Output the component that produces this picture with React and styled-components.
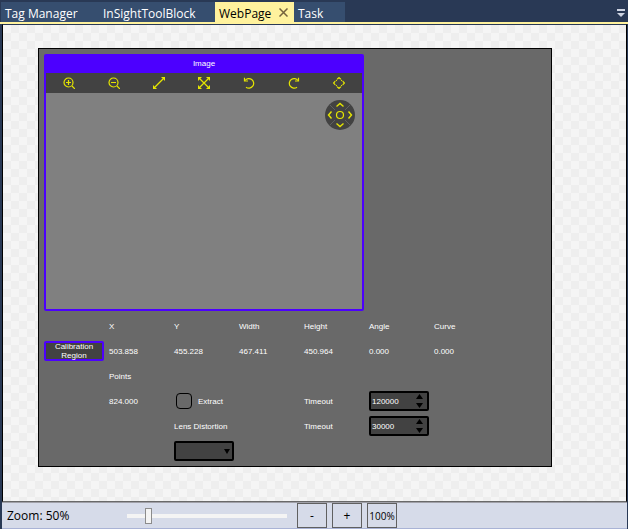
import React, { useState } from "react";
import styled, { createGlobalStyle, css } from "styled-components";

const uiFont = '"Open Sans", "Noto Sans", sans-serif';
const hmiFont = '"Liberation Sans", Arial, sans-serif';
const purple = "#4c00ff";
const yellow = "#e6e600";

const GlobalStyle = createGlobalStyle`
  * { box-sizing: border-box; }
  body { margin: 0; background: #293955; }
  button, input, select { font: inherit; color: inherit; margin: 0; }
  button { padding: 0; border: 0; background: none; }
`;

const Window = styled.div`
  display: flex;
  flex-direction: column;
  min-height: 100vh;
  font: 12px/16px ${uiFont};
  background: #293955;
`;

const TabBar = styled.header`
  display: flex;
  align-items: stretch;
  height: 24px;
  padding: 2px 0 0 1px;
  border-bottom: 2px solid #fff29d;
`;

const Tab = styled.div`
  display: flex;
  align-items: center;
  justify-content: space-between;
  min-width: ${(p) => p.$width}px;
  padding: 0 6px 0 4px;
  background: ${(p) => (p.$active ? "#fff29d" : "#364e6f")};
  color: ${(p) => (p.$active ? "#000" : "#fff")};
`;

const TabTitle = styled.button`
  white-space: nowrap;
  padding-top: 4px;
`;

const CloseButton = styled.button`
  display: flex;
  color: #75633d;
`;

const OverflowButton = styled.button`
  display: flex;
  margin: 7px 3px 0 auto;
  color: #ced4e2;
`;

const Canvas = styled.main`
  flex: 1;
  margin: 0 1px 0 2px;
  padding: 23px 74px 34px 35px;
  border: 1px solid #000;
  border-top-color: #293955;
  border-bottom-color: #696969;
  background: repeating-conic-gradient(#eeeeee 0 25%, #f5f5f5 0 50%) 0 0 / 16px 16px;
`;

const Page = styled.form`
  display: grid;
  grid-template-columns: repeat(auto-fill, 60px);
  grid-template-rows: 257px;
  grid-auto-rows: 20px;
  gap: 5px;
  padding: 5px;
  border: 1px solid #000;
  background: #696969;
  color: #fff;
  font: 8px/10px ${hmiFont};
`;

const place = css`
  grid-column: ${(p) => p.$col} / span ${(p) => p.$span || 1};
  grid-row: ${(p) => p.$row};
`;

const Label = styled.label`
  ${place}
  display: flex;
  align-items: center;
  padding-top: 2px;
  white-space: nowrap;
`;

const ImagePanel = styled.section`
  ${place}
  display: flex;
  flex-direction: column;
  border: 2px solid ${purple};
  border-radius: 2px;
  background: #808080;
`;

const ImageTitle = styled.h2`
  margin: 0;
  height: 17px;
  background: ${purple};
  font: inherit;
  line-height: 15px;
  text-align: center;
`;

const ImageToolbar = styled.div`
  display: flex;
  height: 20px;
  background: #424242;
  color: ${yellow};
`;

const ToolButton = styled.button`
  flex: 1;
  display: flex;
  align-items: center;
  justify-content: center;
`;

const ImageView = styled.div`
  flex: 1;
  display: flex;
  justify-content: flex-end;
  align-items: flex-start;
  padding: 7px;
`;

const PanButton = styled.button`
  display: flex;
  border-radius: 50%;
  color: ${yellow};
`;

const RegionButton = styled.button`
  ${place}
  display: flex;
  align-items: center;
  justify-content: center;
  border: 2px solid ${purple};
  border-radius: 2px;
  background: #424242;
  line-height: 9px;
`;

const CheckLabel = styled.label`
  ${place}
  display: flex;
  align-items: center;
  gap: 6px;
  padding-left: 2px;
`;

const CheckText = styled.span`
  padding-top: 2px;
`;

const CheckBox = styled.input`
  appearance: none;
  width: 16px;
  height: 16px;
  border: 1px solid #000;
  border-radius: 4px;
  &:checked { background: #424242; }
`;

const Spinner = styled.div`
  ${place}
  display: flex;
  border: 2px solid #000;
  border-radius: 2px;
  background: #424242;
`;

const SpinnerInput = styled.input`
  flex: 1;
  min-width: 0;
  padding: 2px 1px 0;
  border: 0;
  background: none;
`;

const SpinnerArrows = styled.div`
  display: flex;
  flex-direction: column;
  justify-content: space-between;
  padding: 1px 4px 1px 0;
  color: #000;
`;

const ArrowButton = styled.button`
  display: flex;
`;

const SelectBox = styled.div`
  ${place}
  display: grid;
  align-items: center;
  border: 2px solid #000;
  border-radius: 2px;
  background: #424242;
  color: #000;
  svg { grid-area: 1 / 1; justify-self: end; margin-right: 2px; pointer-events: none; }
`;

const Select = styled.select`
  grid-area: 1 / 1;
  appearance: none;
  width: 100%;
  height: 16px;
  border: 0;
  background: none;
`;

const StatusBar = styled.footer`
  display: flex;
  align-items: stretch;
  height: 27px;
  margin: 0 1px 0 2px;
  padding-left: 5px;
  border-top: 1px solid #a0a0a8;
  border-bottom: 1px solid #a9b3d6;
  background: #d6dbe9;
  color: #000;
`;

const ZoomLabel = styled.label`
  display: flex;
  align-items: center;
  width: 120px;
`;

const ZoomSlider = styled.input`
  appearance: none;
  align-self: center;
  width: 160px;
  height: 16px;
  margin-right: 10px;
  background: none;
  &::-webkit-slider-runnable-track {
    height: 4px;
    background: #f4f4f4;
  }
  &::-webkit-slider-thumb {
    appearance: none;
    width: 7px;
    height: 16px;
    margin-top: -6px;
    border: 1px solid #8c8c8c;
    background: #f4f4f4;
  }
`;

const ZoomButton = styled.button`
  width: 30px;
  margin-right: 5px;
  border: 1px solid #606060;
  font-size: ${(p) => (p.$small ? 10 : 12)}px;
`;

const Icon = ({ children, size = 12 }) => (
  <svg width={size} height={size} viewBox={`0 0 ${size} ${size}`} fill="none" stroke="currentColor" strokeWidth="1.2" aria-hidden="true">
    {children}
  </svg>
);

const tools = [
  ["Zoom in", <><circle cx="5.5" cy="5.5" r="4.5" /><path d="M9 9l3 3M3 5.5h5M5.5 3v5" /></>],
  ["Zoom out", <><circle cx="5.5" cy="5.5" r="4.5" /><path d="M9 9l3 3M3 5.5h5" /></>],
  ["Fit", <><path d="M2 10L10 2" /><path d="M8 0h4v4zM0 8v4h4z" fill="currentColor" stroke="none" /></>],
  ["Fill", <><path d="M2 2l8 8M10 2l-8 8" /><path d="M0 0h4l-4 4zM8 0h4v4zM0 8v4h4zM12 8v4h-4z" fill="currentColor" stroke="none" /></>],
  ["Rotate left", <><path d="M2 3.500A4.800 4.800 0 1 1 3 10.200" /><path d="M1.500 .8v3.200h3.500" /></>],
  ["Rotate right", <><path d="M10 3.500A4.800 4.800 0 1 0 9 10.200" /><path d="M10.500 .8v3.200h-3.500" /></>],
  ["Pan", <path d="M4.200 2.300L6 .6l1.800 1.700M4.200 9.700L6 11.400l1.800-1.700M2.300 4.200L.6 6l1.700 1.800M9.700 4.200L11.400 6 9.700 7.800M3 3l.8.800M9 3l-.8.800M3 9l.8-.8M9 9l-.8-.8" />],
];

const readings = [
  ["X", "503.858"],
  ["Y", "455.228"],
  ["Width", "467.411"],
  ["Height", "450.964"],
  ["Angle", "0.000"],
  ["Curve", "0.000"],
];

function NumberField({ id, name, initial, row }) {
  const [value, setValue] = useState(initial);
  return (
    <>
      <Label htmlFor={id} $col={5} $row={row}>Timeout</Label>
      <Spinner $col={6} $row={row}>
        <SpinnerInput id={id} name={name} inputMode="numeric" value={value} onChange={(e) => setValue(e.target.value)} />
        <SpinnerArrows>
          <ArrowButton type="button" aria-label="Increase" onClick={() => setValue(Number(value) + 1)}>
            <svg width="7" height="5" viewBox="0 0 7 5"><path d="M3.500 0L7 5H0z" /></svg>
          </ArrowButton>
          <ArrowButton type="button" aria-label="Decrease" onClick={() => setValue(Number(value) - 1)}>
            <svg width="7" height="5" viewBox="0 0 7 5"><path d="M3.500 5L7 0H0z" /></svg>
          </ArrowButton>
        </SpinnerArrows>
      </Spinner>
    </>
  );
}

export default function App() {
  const [zoom, setZoom] = useState(50);
  return (
    <Window>
      <GlobalStyle />
      <TabBar>
        <Tab $width={98}><TabTitle>Tag Manager</TabTitle></Tab>
        <Tab $width={116}><TabTitle>InSightToolBlock</TabTitle></Tab>
        <Tab $width={79} $active>
          <TabTitle>WebPage</TabTitle>
          <CloseButton aria-label="Close WebPage">
            <svg width="9" height="9" viewBox="0 0 9 9" stroke="currentColor" strokeWidth="1.5"><path d="M.5 .5l8 8M8.500 .5l-8 8" /></svg>
          </CloseButton>
        </Tab>
        <Tab $width={51}><TabTitle>Task</TabTitle></Tab>
        <OverflowButton aria-label="Open documents">
          <svg width="8" height="8" viewBox="0 0 8 8" fill="currentColor"><path d="M0 0h8v2H0zM0 4h8L4 8z" /></svg>
        </OverflowButton>
      </TabBar>

      <Canvas>
        <Page onSubmit={(e) => e.preventDefault()}>
          <ImagePanel $col={1} $span={5} $row={1}>
            <ImageTitle>Image</ImageTitle>
            <ImageToolbar>
              {tools.map(([name, shape]) => (
                <ToolButton type="button" key={name} aria-label={name}><Icon>{shape}</Icon></ToolButton>
              ))}
            </ImageToolbar>
            <ImageView>
              <PanButton type="button" aria-label="Pan image">
                <Icon size={30}>
                  <circle cx="15" cy="15" r="15" fill="#424242" stroke="none" />
                  <path d="M5 5l5 5M25 5l-5 5M5 25l5-5M25 25l-5-5" stroke="#606060" strokeWidth="1" />
                  <circle cx="15" cy="15" r="3.500" />
                  <path d="M11.500 6.500L15 3.500l3.500 3M11.500 23.500l3.500 3 3.500-3M6.500 11.500l-3 3.500 3 3.500M23.500 11.500l3 3.500-3 3.500" strokeWidth="1.4" />
                </Icon>
              </PanButton>
            </ImageView>
          </ImagePanel>

          {readings.map(([name, value], i) => (
            <React.Fragment key={name}>
              <Label as="span" $col={i + 2} $row={2}>{name}</Label>
              <Label as="output" $col={i + 2} $row={3}>{value}</Label>
            </React.Fragment>
          ))}
          <RegionButton type="button" $col={1} $row={3}>Calibration Region</RegionButton>

          <Label as="span" $col={2} $row={4}>Points</Label>
          <Label as="output" $col={2} $row={5}>824.000</Label>
          <CheckLabel $col={3} $row={5}><CheckBox type="checkbox" /><CheckText>Extract</CheckText></CheckLabel>
          <NumberField id="extract-timeout" name="extractTimeout" initial="120000" row={5} />

          <Label htmlFor="lens" $col={3} $row={6}>Lens Distortion</Label>
          <NumberField id="lens-timeout" name="lensTimeout" initial="30000" row={6} />
          <SelectBox $col={3} $row={7}>
            <Select id="lens" defaultValue=""><option value="" aria-label="None" /></Select>
            <svg width="6" height="5" viewBox="0 0 6 5"><path d="M0 0h6L3 5z" /></svg>
          </SelectBox>
        </Page>
      </Canvas>

      <StatusBar>
        <ZoomLabel htmlFor="zoom">Zoom: {zoom}%</ZoomLabel>
        <ZoomSlider id="zoom" type="range" min="10" max="350" value={zoom} onChange={(e) => setZoom(Number(e.target.value))} />
        <ZoomButton aria-label="Zoom out" onClick={() => setZoom(Math.max(10, zoom - 10))}>-</ZoomButton>
        <ZoomButton aria-label="Zoom in" onClick={() => setZoom(Math.min(350, zoom + 10))}>+</ZoomButton>
        <ZoomButton $small onClick={() => setZoom(100)}>100%</ZoomButton>
      </StatusBar>
    </Window>
  );
}
